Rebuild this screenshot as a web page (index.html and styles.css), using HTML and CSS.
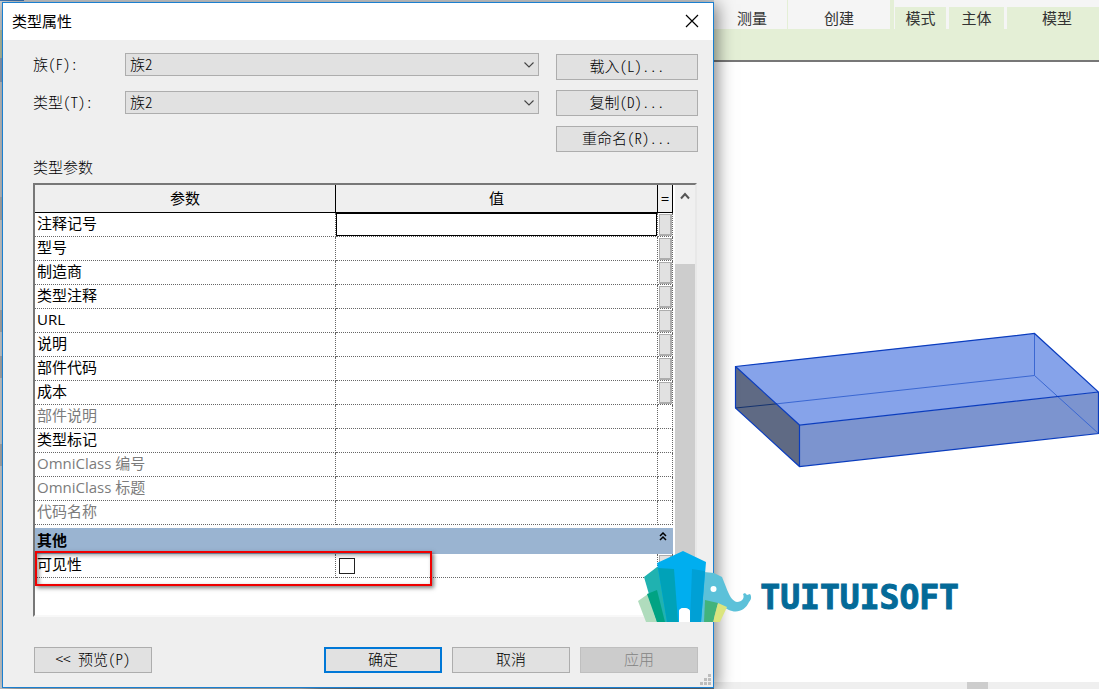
FILE: index.html
```html
<!DOCTYPE html>
<html lang="zh-CN">
<head>
<meta charset="utf-8">
<title>类型属性</title>
<link rel="stylesheet" href="styles.css">
</head>
<body>
<div class="desktop">
  <div class="backdrop">
    <section class="dialog" role="dialog" aria-labelledby="dialog-title">
      <header class="titlebar">
        <h1 class="title" id="dialog-title">类型属性</h1>
        <button class="close" type="button" aria-label="关闭">
          <svg width="14" height="14" viewBox="0 0 14 14"><path d="M1 1 13 13M13 1 1 13" fill="none" stroke="#000" stroke-width="1.2"/></svg>
        </button>
      </header>
      <form class="content">
        <div class="top">
          <div class="fields">
            <div class="field">
              <label for="family">族(F):</label>
              <div class="select-wrap">
                <select id="family"><option>族2</option></select>
                <svg class="chevron" width="10" height="6" viewBox="0 0 10 6"><path d="M.5.5 5 5 9.500.5" fill="none" stroke="#444" stroke-width="1.1"/></svg>
              </div>
            </div>
            <div class="field">
              <label for="type">类型(T):</label>
              <div class="select-wrap">
                <select id="type"><option>族2</option></select>
                <svg class="chevron" width="10" height="6" viewBox="0 0 10 6"><path d="M.5.5 5 5 9.500.5" fill="none" stroke="#444" stroke-width="1.1"/></svg>
              </div>
            </div>
          </div>
          <div class="actions">
            <button class="btn" type="button">载入(L)...</button>
            <button class="btn" type="button">复制(D)...</button>
            <button class="btn" type="button">重命名(R)...</button>
          </div>
        </div>
        <h2 class="caption">类型参数</h2>
        <div class="frame">
          <table class="params">
            <colgroup><col class="col-name"><col><col class="col-eq"></colgroup>
            <thead>
              <tr><th>参数</th><th>值</th><th>=</th></tr>
            </thead>
            <tbody>
              <tr><td><label for="p1">注释记号</label></td><td><input class="value active" id="p1" type="text"></td><td><button class="eq" type="button" aria-label="关联参数"></button></td></tr>
              <tr><td><label for="p2">型号</label></td><td><input class="value" id="p2" type="text"></td><td><button class="eq" type="button" aria-label="关联参数"></button></td></tr>
              <tr><td><label for="p3">制造商</label></td><td><input class="value" id="p3" type="text"></td><td><button class="eq" type="button" aria-label="关联参数"></button></td></tr>
              <tr><td><label for="p4">类型注释</label></td><td><input class="value" id="p4" type="text"></td><td><button class="eq" type="button" aria-label="关联参数"></button></td></tr>
              <tr><td><label for="p5">URL</label></td><td><input class="value" id="p5" type="text"></td><td><button class="eq" type="button" aria-label="关联参数"></button></td></tr>
              <tr><td><label for="p6">说明</label></td><td><input class="value" id="p6" type="text"></td><td><button class="eq" type="button" aria-label="关联参数"></button></td></tr>
              <tr><td><label for="p7">部件代码</label></td><td><input class="value" id="p7" type="text"></td><td><button class="eq" type="button" aria-label="关联参数"></button></td></tr>
              <tr><td><label for="p8">成本</label></td><td><input class="value" id="p8" type="text"></td><td><button class="eq" type="button" aria-label="关联参数"></button></td></tr>
              <tr class="off"><td>部件说明</td><td></td><td></td></tr>
              <tr><td><label for="p10">类型标记</label></td><td><input class="value" id="p10" type="text"></td><td></td></tr>
              <tr class="off"><td>OmniClass 编号</td><td></td><td></td></tr>
              <tr class="off"><td>OmniClass 标题</td><td></td><td></td></tr>
              <tr class="off"><td>代码名称</td><td></td><td></td></tr>
            </tbody>
            <tbody>
              <tr class="group"><th colspan="2" scope="rowgroup">其他</th><td>
                <svg width="8" height="9" viewBox="0 0 8 9"><path d="M1 4 4 1 7 4M1 8 4 5 7 8" fill="none" stroke="#000" stroke-width="1.5"/></svg>
              </td></tr>
              <tr class="marked"><td><label for="visible">可见性</label><span class="highlight"></span></td><td><input class="check" id="visible" type="checkbox"></td><td><button class="eq" type="button" aria-label="关联参数"></button></td></tr>
            </tbody>
          </table>
          <div class="scroll">
            <svg class="scroll-up" width="10" height="8" viewBox="0 0 10 8"><path d="M1 6.500 5 2 9 6.500" fill="none" stroke="#555" stroke-width="2"/></svg>
            <div class="thumb"></div>
          </div>
        </div>
        <div class="footer">
          <button class="btn preview" type="button">&lt;&lt; 预览(P)</button>
          <button class="btn primary" type="submit">确定</button>
          <button class="btn" type="button">取消</button>
          <button class="btn" type="button" disabled>应用</button>
        </div>
      </form>
      <svg class="grip" width="11" height="11" viewBox="0 0 11 11"><path d="M8 0h3v3H8zM4 4h3v3H4zM8 4h3v3H8zM0 8h3v3H0zM4 8h3v3H4zM8 8h3v3H8z" fill="#bdbdbd"/></svg>
    </section>
  </div>

  <main class="workspace">
    <nav class="ribbon">
      <span class="panel measure">测量</span>
      <span class="panel create">创建</span>
      <span class="panel context mode">模式</span>
      <span class="panel context host">主体</span>
      <span class="panel context model">模型</span>
    </nav>
    <svg class="canvas" viewBox="714 62 385 620" preserveAspectRatio="xMinYMin meet">
      <path d="M735.500 366.500 1034.500 333.500 1098.500 392 799.500 425z" fill="#86a3ea"/>
      <path d="M735.500 366.500 799.500 425V466.500L735.500 408z" fill="#5f6a84"/>
      <path d="M799.500 425 1098.500 392V433.500L799.500 466.500z" fill="#7c94cf"/>
      <path d="M777 403.800 1034.500 375.500V333.500M1034.500 375.500 1098.500 433.500" fill="none" stroke="#3a67d2"/>
      <path d="M735.500 408 777 403.800" fill="none" stroke="#15336f"/>
      <path d="M735.500 366.500 1034.500 333.500 1098.500 392V433.500L799.500 466.500 735.500 408zL799.500 425 1098.500 392M799.500 425V466.500" fill="none" stroke="#0a3cbe" stroke-width="1.2"/>
    </svg>
    <div class="hscroll"><div class="hthumb"></div></div>
  </main>

  <div class="brand">
    <svg width="114" height="73" viewBox="637 550 114 73">
      <path d="M637 601 647 594 663 622H645z" fill="#b0dcbd"/>
      <path d="M643 577 656 567 674 569 678 622H656z" fill="#20b2b0"/>
      <path d="M703 572 713 573 721 577 725 587C728 595 731 601 736 602 741 602 744 598 742 594L744 593 746 595 749 594C751 597 750 600 748 602 745 609 738 613 731 611 726 610 722 606 717 604L703 622H697z" fill="#5cc1d9"/>
      <path d="M704 600 717 603 712 622H703z" fill="#42b37c"/>
      <path d="M717 603 726 607 719 622H712z" fill="#dbe57e"/>
      <path d="M656 563 682 551 705 562 700 622H689V612C689 609 686 608 683 608 680 608 678 609 678 612V622H666z" fill="#00aeef"/>
      <path d="M657 568 673 569 677 622H666z" fill="#00a2b8"/>
      <path d="M646 594 656 590 664 622H656z" fill="#00a383"/>
      <path d="M691 569 704 571 700 622H689z" fill="#00a0d5"/>
      <circle cx="712.500" cy="589" r="3" fill="#fff"/>
      <path d="M678 622V612C678 609 680 608 683 608 686 608 689 609 689 612V622z" fill="#fff"/>
    </svg>
    <span class="brand-name">TUITUISOFT</span>
  </div>
</div>
</body>
</html>
```
FILE: styles.css
```css
* {
  box-sizing: border-box;
}

body {
  margin: 0;
  font: 15px/20px "Open Sans", "Noto Sans CJK SC", sans-serif;
  color: #000;
}

button,
input,
select {
  margin: 0;
  padding: 0;
  font: inherit;
  color: inherit;
  border-radius: 0;
}

.desktop {
  position: relative;
  display: grid;
  grid-template-columns: minmax(0, 1fr) 385px;
  min-height: 100vh;
  overflow: hidden;
}

.backdrop {
  display: flex;
  padding: 2px 0 1px 2px;
  background:
    linear-gradient(#3f77b8, #3f77b8) 0 0 / 24px 1px no-repeat,
    linear-gradient(90deg, #c9cbcd 300px, #8296a8 320px, #6f7f8c 360px, #5b8fc4 440px, #7a858e 560px, #6d7a85) 0 100% / 100% 1px no-repeat,
    linear-gradient(#cfd4d8 28px, #b9c6a8 28px 56px, #8fa3bd 56px 80px, #c6c8ca 80px 195px, #b3b3b3 195px 218px, #d2d5d8 218px 308px, #b3b3b3 308px 330px, #d2d5d8 330px 354px, #b3b3b3 354px 376px, #d2d5d8 376px 442px, #b3b3b3 442px 464px, #d2d5d8 464px) 0 2px / 2px 100% no-repeat,
    #d5d8da;
}

.dialog {
  position: relative;
  z-index: 1;
  flex: 1;
  display: flex;
  flex-direction: column;
  border: 1px solid #1a7fd0;
  background: #efefef;
  box-shadow: 3px 2px 16px rgba(0, 0, 0, 0.5);
}

.titlebar {
  display: flex;
  align-items: center;
  justify-content: space-between;
  height: 37px;
  padding: 0 14px 2px 9px;
  background: #fff;
}

.title,
.caption {
  margin: 0;
  font-size: 15px;
  font-weight: 400;
}

.close {
  display: flex;
  border: 0;
  background: none;
}

.content {
  flex: 1;
  display: flex;
  flex-direction: column;
  padding: 13px 15px 14px 30px;
  font-family: "Noto Sans CJK SC", sans-serif;
  font-feature-settings: "hwid";
  font-weight: 300;
}

.top {
  display: flex;
  gap: 17px;
}

.fields {
  flex: 1;
  display: flex;
  flex-direction: column;
  gap: 15px;
}

.field {
  display: flex;
  align-items: center;
  height: 23px;
}

.field label {
  width: 92px;
  padding-bottom: 2px;
}

.select-wrap {
  position: relative;
  flex: 1;
  display: flex;
}

.select-wrap select {
  flex: 1;
  height: 23px;
  padding: 0 24px 2px 4px;
  appearance: none;
  border: 1px solid #adadad;
  background: #e1e1e1;
}

.chevron {
  position: absolute;
  right: 5px;
  top: 9px;
  pointer-events: none;
}

.actions {
  display: flex;
  flex-direction: column;
  gap: 10px;
  width: 142px;
  padding-top: 1px;
}

.btn {
  height: 26px;
  padding-bottom: 2px;
  border: 1px solid #adadad;
  background: #e1e1e1;
  text-align: center;
}

.caption {
  margin: 5px 0 6px;
  font-weight: 300;
}

.frame {
  flex: 1;
  display: flex;
  align-items: flex-start;
  gap: 2px;
  margin-right: 1px;
  border: 2px solid;
  border-color: #777 #e8e8e8 #f8f8f8 #777;
  background: #fff;
}

.params {
  flex: 1;
  table-layout: fixed;
  border-spacing: 0;
  font-family: "Open Sans", "Noto Sans CJK SC", sans-serif;
  font-feature-settings: normal;
  font-weight: 400;
}

.col-name {
  width: 301px;
}

.col-eq {
  width: 15px;
}

.params th,
.params td {
  padding: 0;
}

.params thead th {
  height: 28px;
  padding-bottom: 2px;
  border: solid #000;
  border-width: 0 1px 1px 0;
  background: #efefef;
  font-weight: 400;
}

.params tbody td {
  height: 24px;
  border: dotted #666;
  border-width: 0 1px 1px 0;
  line-height: 20px;
}

.params tbody td:first-child {
  padding: 0 0 3px 2px;
}

.value {
  display: block;
  width: 100%;
  height: 23px;
  padding: 0 3px;
  border: 0;
  background: none;
}

.active {
  border: 1px solid #000;
}

.eq {
  display: block;
  width: 13px;
  height: 22px;
  margin-left: 1px;
  border: solid #adadad;
  border-width: 1px 2px 2px 1px;
  background: #e1e1e1;
}

.off {
  color: #7c7c7c;
}

.params .group th,
.params .group td {
  height: 29px;
  border: 0;
  border-top: 3px solid #fff;
  background: #9ab4d1;
}

.params .group th {
  padding: 0 0 2px 2px;
  text-align: left;
  font-weight: 700;
}

.params .group td {
  padding: 4px 0 0 1px;
  vertical-align: top;
}

.group svg {
  display: block;
}

.marked td:first-child {
  position: relative;
}

.highlight {
  position: absolute;
  top: -3px;
  left: 0;
  z-index: 1;
  width: 397px;
  height: 35px;
  border: 2px solid #f00000;
  box-shadow: 2px 2px 4px rgba(0, 0, 0, 0.5), inset 2px 2px 4px rgba(0, 0, 0, 0.4);
  pointer-events: none;
}

.check {
  display: block;
  width: 16px;
  height: 16px;
  margin-left: 3px;
  appearance: none;
  border: 1px solid #222;
  background: #fff;
}

.scroll {
  align-self: stretch;
  display: flex;
  flex-direction: column;
  align-items: center;
  width: 20px;
  padding-bottom: 18px;
  background: #f0f0f0;
}

.scroll-up {
  margin: 7px 0 64px;
}

.thumb {
  flex: 1;
  width: 100%;
  background: #cdcdcd;
}

.footer {
  display: flex;
  gap: 10px;
  margin-top: 30px;
  padding-left: 1px;
}

.footer .btn {
  width: 118px;
}

.preview {
  margin-right: auto;
}

.btn.primary {
  border: 2px solid #0078d7;
}

.btn:disabled {
  border-color: #bfbfbf;
  background: #ccc;
  color: #838383;
}

.grip {
  position: absolute;
  right: 2px;
  bottom: 2px;
}

.workspace {
  display: flex;
  flex-direction: column;
  min-width: 0;
  background: #fff;
}

.ribbon {
  display: flex;
  align-items: flex-start;
  height: 62px;
  border-bottom: 2px solid #777;
  background: #e4efd6;
}

.panel {
  height: 29px;
  padding-top: 8px;
  border-right: 1px solid #e4efd6;
  background: #f5f5f5;
  color: #333;
  text-align: center;
}

.measure {
  width: 74px;
  padding-left: 3px;
}

.create {
  width: 103px;
  margin-right: 3px;
}

.context {
  padding-top: 1px;
  border: solid #f5f5f5;
  border-width: 7px 2px 0 1px;
  background: #e4efd6;
}

.mode {
  width: 54px;
}

.host {
  width: 58px;
}

.model {
  flex: 1;
  padding-left: 8px;
  border-right: 0;
}

.canvas {
  flex: 1;
  width: 100%;
}

.hscroll {
  display: flex;
  justify-content: flex-end;
  height: 7px;
  padding-right: 111px;
  background: #efefef;
}

.hthumb {
  width: 21px;
  background: #cdcdcd;
}

.brand {
  position: absolute;
  top: 550px;
  right: 140px;
  z-index: 2;
  display: flex;
  align-items: center;
  gap: 8px;
}

.brand-name {
  padding-top: 22px;
  font: 700 33px/36px "DejaVu Sans Mono", monospace;
  color: #046a98;
  -webkit-text-stroke: 1px #046a98;
}
```
